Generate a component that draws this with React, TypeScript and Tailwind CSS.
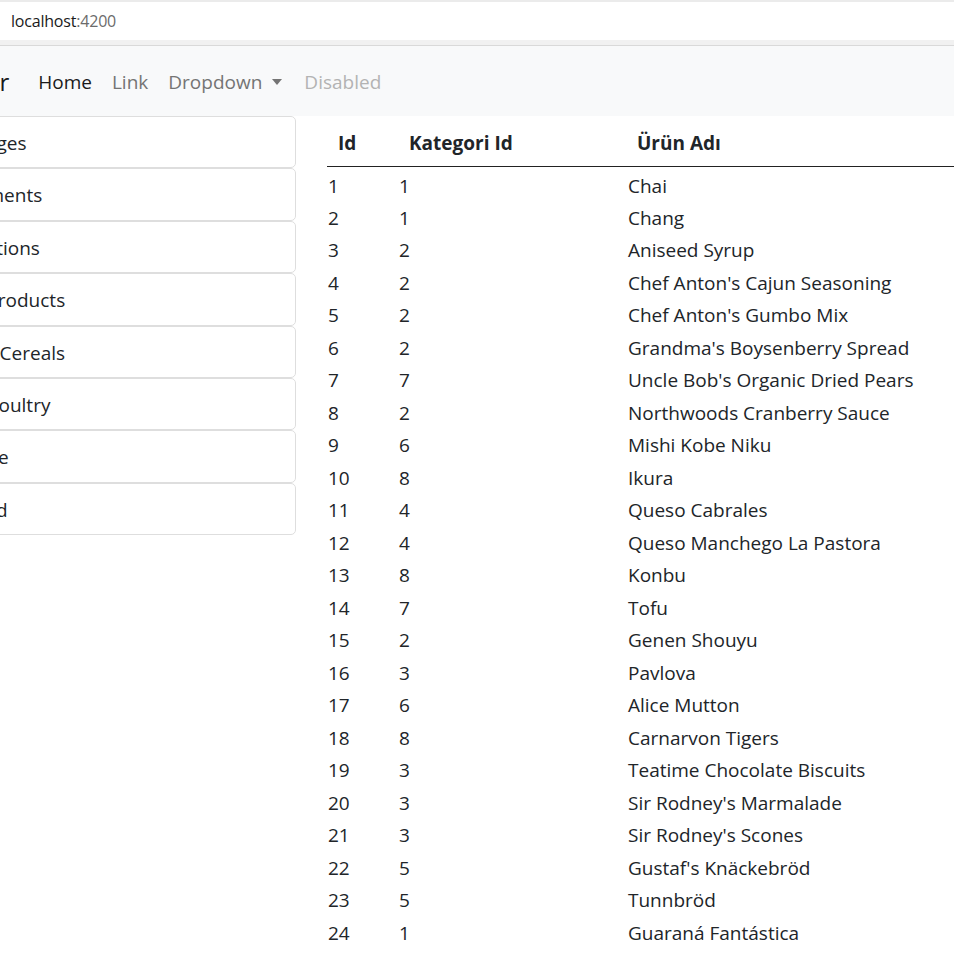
import React from "react";

const categories = [
  "Beverages",
  "Condiments",
  "Confections",
  "Dairy Products",
  "Grains/Cereals",
  "Meat/Poultry",
  "Produce",
  "Seafood",
];

const products: [number, number, string][] = [
  [1, 1, "Chai"],
  [2, 1, "Chang"],
  [3, 2, "Aniseed Syrup"],
  [4, 2, "Chef Anton's Cajun Seasoning"],
  [5, 2, "Chef Anton's Gumbo Mix"],
  [6, 2, "Grandma's Boysenberry Spread"],
  [7, 7, "Uncle Bob's Organic Dried Pears"],
  [8, 2, "Northwoods Cranberry Sauce"],
  [9, 6, "Mishi Kobe Niku"],
  [10, 8, "Ikura"],
  [11, 4, "Queso Cabrales"],
  [12, 4, "Queso Manchego La Pastora"],
  [13, 8, "Konbu"],
  [14, 7, "Tofu"],
  [15, 2, "Genen Shouyu"],
  [16, 3, "Pavlova"],
  [17, 6, "Alice Mutton"],
  [18, 8, "Carnarvon Tigers"],
  [19, 3, "Teatime Chocolate Biscuits"],
  [20, 3, "Sir Rodney's Marmalade"],
  [21, 3, "Sir Rodney's Scones"],
  [22, 5, "Gustaf's Knäckebröd"],
  [23, 5, "Tunnbröd"],
  [24, 1, "Guaraná Fantástica"],
];

export default function App() {
  return (
    <div className="w-[954px] h-[953px] overflow-hidden bg-white text-[#212529] font-['Open_Sans',sans-serif]">
      {/* adres çubuğu */}
      <div className="h-[2px] bg-[#ebebeb]" />
      <div className="h-[38px] bg-white flex items-center pl-[11px] pb-[1px] text-[16px] tracking-[-0.2px]">
        <span className="text-[#1a1a1a]">localhost</span>
        <span className="text-[#6b6b6b]">:4200</span>
      </div>
      <div className="h-[6px] bg-[#f1f1f1] border-b border-[#d9d9d9]" />

      {/* navbar */}
      <nav className="h-[70px] pt-[2px] bg-[#f8f9fa] flex items-center whitespace-nowrap">
        <span className="-ml-[72px] text-[24px] text-[#1a1a1a] mr-[29px]">Navbar</span>
        <span className="text-[19px] text-[#1a1a1a] mr-[20px]">Home</span>
        <span className="text-[19px] text-[#747474] mr-[20px]">Link</span>
        <span className="text-[19px] text-[#747474] mr-[22px] flex items-center">
          Dropdown
          <span className="ml-[10px] inline-block w-0 h-0 border-l-[5.5px] border-r-[5.5px] border-t-[6px] border-l-transparent border-r-transparent border-t-[#747474]" />
        </span>
        <span className="text-[19px] text-[#b3b3b3]">Disabled</span>
      </nav>

      <div className="flex">
        {/* kategoriler */}
        <div className="w-[296px] shrink-0 overflow-hidden">
          <ul className="-ml-[91px] w-[387px]">
            {categories.map((c) => (
              <li
                key={c}
                className="h-[52.4px] flex items-center pt-[2px] pl-[25px] border border-[#dedede] rounded-[5px] text-[19px] whitespace-nowrap"
              >
                {c}
              </li>
            ))}
          </ul>
        </div>

        {/* ürünler */}
        <div className="ml-[31px] flex-1 overflow-hidden">
          <table className="w-[700px] border-collapse text-[19px]">
            <thead>
              <tr className="h-[50px] border-b border-[#222]">
                <th className="w-[71px] text-left font-bold pl-[11px] pt-[4px]">Id</th>
                <th className="w-[229px] text-left font-bold pl-[11px] pt-[4px]">Kategori Id</th>
                <th className="text-left font-bold pl-[10px] pt-[4px]">Ürün Adı</th>
              </tr>
            </thead>
            <tbody>
              {products.map(([id, cat, name]) => (
                <tr key={id} className="h-[32.5px]">
                  <td className="pl-[1px] pt-[6px] pb-0 align-top leading-[26px]">{id}</td>
                  <td className="pl-[1px] pt-[6px] pb-0 align-top leading-[26px]">{cat}</td>
                  <td className="pl-[1px] pt-[6px] pb-0 align-top leading-[26px]">{name}</td>
                </tr>
              ))}
            </tbody>
          </table>
        </div>
      </div>
    </div>
  );
}
